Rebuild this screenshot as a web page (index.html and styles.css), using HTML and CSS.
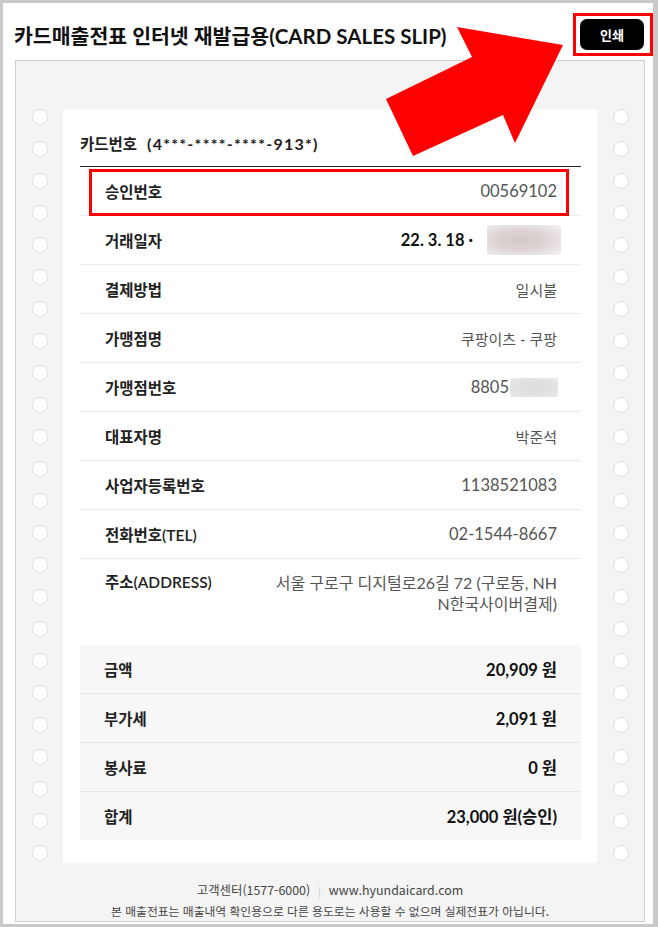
FILE: index.html
```html
<!DOCTYPE html>
<html lang="ko">
<head>
<meta charset="utf-8">
<title>카드매출전표</title>
<link rel="stylesheet" href="styles.css">
</head>
<body>
<div class="frame">
  <header class="head">
    <h1 class="title">카드매출전표 인터넷 재발급용(CARD SALES SLIP)</h1>
    <div class="btn-mark"><button class="print">인쇄</button></div>
  </header>
  <section class="slip">
    <div class="holes">
      <i></i><i></i><i></i><i></i><i></i><i></i><i></i><i></i><i></i><i></i><i></i><i></i>
      <i></i><i></i><i></i><i></i><i></i><i></i><i></i><i></i><i></i><i></i><i></i><i></i>
    </div>
    <div class="receipt">
      <div class="card-no"><span class="lbl">카드번호</span><span class="num">(4***-****-****-913*)</span></div>
      <div class="row mark"><span class="lbl">승인번호</span><span class="val n">00569102</span></div>
      <div class="row"><span class="lbl">거래일자</span><span class="val n strong">22. 3. 18 ·<span class="blur b1"></span></span></div>
      <div class="row"><span class="lbl">결제방법</span><span class="val">일시불</span></div>
      <div class="row"><span class="lbl">가맹점명</span><span class="val">쿠팡이츠 - 쿠팡</span></div>
      <div class="row"><span class="lbl">가맹점번호</span><span class="val n">8805<span class="blur b2"></span></span></div>
      <div class="row"><span class="lbl">대표자명</span><span class="val">박준석</span></div>
      <div class="row"><span class="lbl">사업자등록번호</span><span class="val n">1138521083</span></div>
      <div class="row"><span class="lbl">전화번호(TEL)</span><span class="val n">02-1544-8667</span></div>
      <div class="row addr"><span class="lbl">주소(ADDRESS)</span><span class="val">서울 구로구 디지털로26길 72 (구로동, NHN한국사이버결제)</span></div>
      <div class="sum">
        <div class="srow"><span class="lbl">금액</span><span class="val">20,909 원</span></div>
        <div class="srow"><span class="lbl">부가세</span><span class="val">2,091 원</span></div>
        <div class="srow"><span class="lbl">봉사료</span><span class="val">0 원</span></div>
        <div class="srow"><span class="lbl">합계</span><span class="val">23,000 원(승인)</span></div>
      </div>
    </div>
    <div class="holes">
      <i></i><i></i><i></i><i></i><i></i><i></i><i></i><i></i><i></i><i></i><i></i><i></i>
      <i></i><i></i><i></i><i></i><i></i><i></i><i></i><i></i><i></i><i></i><i></i><i></i>
    </div>
    <footer class="foot">
      <p class="f1">고객센터(1577-6000)<span class="sep">|</span>www.hyundaicard.com</p>
      <p>본 매출전표는 매출내역 확인용으로 다른 용도로는 사용할 수 없으며 실제전표가 아닙니다.</p>
    </footer>
  </section>
  <svg class="arrow" width="658" height="927" viewBox="0 0 658 927" aria-hidden="true">
    <polygon points="563,45 457,27 472,57 386,99 413,156 503,115 515,143" fill="#ff0000"/>
  </svg>
</div>
</body>
</html>
```
FILE: styles.css
```css
* { box-sizing: border-box; }
html, body { margin: 0; padding: 0; background: #fff; }
body {
  font-family: "Lato", "Noto Sans CJK KR", sans-serif;
  color: #222;
}
.frame {
  position: relative;
  width: 658px;
  height: 927px;
  border: 3px solid #c9c9c9;
  border-right-width: 5px;
  overflow: hidden;
  background: #fff;
}
.head {
  display: flex;
  align-items: center;
  justify-content: space-between;
  padding: 9px 0 0 11px;
  height: 54px;
}
.title {
  margin: 0;
  font-size: 20.5px;
  font-weight: 700;
  color: #111;
}
.btn-mark {
  border: 3px solid #ff0000;
  padding: 3px 4px;
  height: 43px;
  width: 80px;
}
.print {
  display: block;
  width: 64px;
  height: 31px;
  border: 0;
  border-radius: 7px;
  background: #000;
  color: #fff;
  font-family: "Noto Sans CJK KR", sans-serif;
  font-size: 13px;
  font-weight: 700;
  padding: 0;
}
.slip {
  margin: 3px 8px 0 12px;
  border: 1px solid #cfcfcf;
  background: #f4f4f4;
  display: grid;
  grid-template-columns: 47px 534px 47px;
  padding-top: 48px;
}
.holes {
  display: flex;
  flex-direction: column;
  align-items: center;
  gap: 16px;
}
.holes i {
  display: block;
  width: 16px;
  height: 16px;
  border-radius: 50%;
  background: #fff;
  border: 1px solid #dedede;
}
.receipt {
  background: #fff;
  padding: 24px 16px 21px 17px;
  height: 754px;
}
.card-no {
  font-size: 16px;
  font-weight: 700;
  line-height: 22px;
  padding-bottom: 11px;
  border-bottom: 1px solid #222;
}
.card-no .lbl { font-size: 15.5px; }
.card-no .num { margin-left: 10px; letter-spacing: 1.25px; }
.row {
  position: relative;
  display: flex;
  justify-content: space-between;
  align-items: center;
  height: 49px;
  padding: 0 24px 0 25px;
  border-bottom: 1px solid #ececec;
  font-size: 15px;
}
.lbl { font-weight: 600; color: #222; font-size: 15.5px; white-space: nowrap; }
.val { color: #555; text-align: right; display: flex; align-items: center; }
.val.n { font-size: 16.5px; }
.val.strong { color: #111; font-weight: 700; }
.mark::after {
  content: "";
  position: absolute;
  left: 9px;
  right: 12px;
  top: 2px;
  bottom: -1px;
  border: 3px solid #ff0000;
}
.blur {
  display: inline-block;
  border-radius: 2px;
}
.b1 {
  width: 74px;
  height: 30px;
  margin-left: 14px;
  margin-right: -4px;
  background: radial-gradient(ellipse at 45% 50%, #d3c7c8 0%, #ddd4d4 45%, #ede8e8 80%, #f6f3f3 100%);
}
.b2 {
  width: 48px;
  height: 19px;
  margin-left: 1px;
  margin-right: -1px;
  background: radial-gradient(ellipse at 50% 50%, #dcdcdc 0%, #e2e2e2 60%, #ececec 100%);
}
.addr {
  height: auto;
  align-items: flex-start;
  padding-top: 13px;
  padding-bottom: 13px;
  border-bottom: 0;
  line-height: 21px;
}
.addr .val {
  display: block;
  width: 287px;
  font-size: 16px;
  word-break: break-all;
}
.sum {
  margin-top: 18px;
  background: #f7f7f7;
}
.srow {
  display: flex;
  justify-content: space-between;
  align-items: center;
  height: 49px;
  padding: 0 24px 0 24px;
  border-bottom: 1px solid #e7e7e7;
}
.srow:last-child { border-bottom: 0; height: 48px; }
.srow .val { color: #111; font-weight: 700; font-size: 16.5px; }
.foot {
  grid-column: 1 / -1;
  text-align: center;
  padding-top: 17px;
  font-family: "Noto Sans CJK KR", sans-serif;
  font-size: 11.8px;
  color: #444;
}
.foot p { margin: 0; line-height: 20px; }
.foot .f1 { font-size: 12.4px; }
.sep { color: #ccc; margin: 0 8px; font-size: 10px; }
.arrow {
  position: absolute;
  left: -3px;
  top: -3px;
  pointer-events: none;
}
```
